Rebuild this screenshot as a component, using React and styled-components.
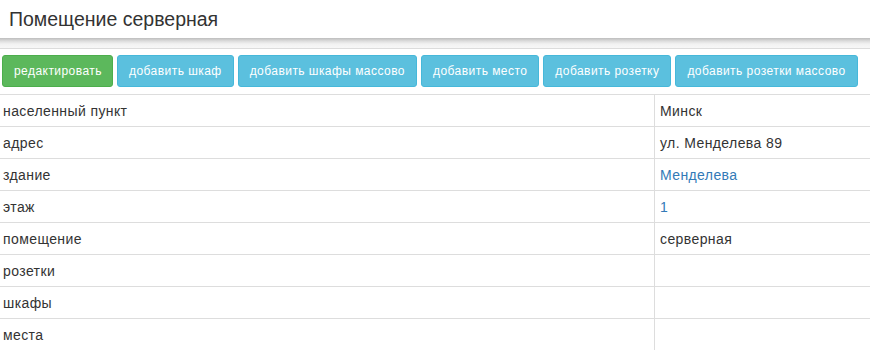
import React from 'react';
import styled, { createGlobalStyle } from 'styled-components';

const GlobalStyle = createGlobalStyle`
    body {
        margin: 0;
        background: #fff;
        font-family: "Liberation Sans", Arial, sans-serif;
        color: #333;
    }
`;

const Header = styled.header`
    height: 38px;
    padding: 0 9px;
    display: flex;
    align-items: center;
`;

const Title = styled.h1`
    margin: 0;
    font-size: 19.5px;
    font-weight: normal;
    color: #333;
`;

const ShadowStrip = styled.div`
    height: 10px;
    background: linear-gradient(#bdbdbd 0px, #dcdcdc 3px, #f2f2f2 6px, #f7f7f7 10px);
    border-bottom: 1px solid #dcdcdc;
`;

const Toolbar = styled.div`
    display: flex;
    gap: 4px;
    padding: 6px 2px 6px;
    margin-bottom: 1px;
`;

const Button = styled.button`
    font-family: "Liberation Sans", Arial, sans-serif;
    font-size: 12px;
    letter-spacing: 0.45px;
    color: #fff;
    height: 32px;
    padding: 0 11px;
    border-radius: 3px;
    border: 1px solid ${p => (p.$green ? '#4cae4c' : '#46b8da')};
    background: ${p => (p.$green ? '#5cb85c' : '#5bc0de')};
    cursor: pointer;
`;

const Table = styled.table`
    width: 100%;
    border-collapse: collapse;
    font-size: 14px;
    letter-spacing: 0.4px;
`;

const Row = styled.tr`
    height: 32px;
    border-top: 1px solid #ddd;
`;

const Cell = styled.td`
    padding: 0 3px;
    vertical-align: middle;
    color: #333;
    & + & {
        border-left: 1px solid #ddd;
        padding-left: 5px;
        width: 207px;
    }
`;

const Link = styled.a`
    color: #337ab7;
    text-decoration: none;
`;

const rows = [
    ['населенный пункт', 'Минск'],
    ['адрес', 'ул. Менделева 89'],
    ['здание', <Link href="#">Менделева</Link>],
    ['этаж', <Link href="#">1</Link>],
    ['помещение', 'серверная'],
    ['розетки', ''],
    ['шкафы', ''],
    ['места', ''],
];

export default function App() {
    return (
        <>
            <GlobalStyle />
            <Header>
                <Title>Помещение серверная</Title>
            </Header>
            <ShadowStrip />
            <Toolbar>
                <Button $green style={{ width: 111 }}>редактировать</Button>
                <Button>добавить шкаф</Button>
                <Button>добавить шкафы массово</Button>
                <Button>добавить место</Button>
                <Button>добавить розетку</Button>
                <Button>добавить розетки массово</Button>
            </Toolbar>
            <Table>
                <tbody>
                    {rows.map(([label, value], i) => (
                        <Row key={i}>
                            <Cell>{label}</Cell>
                            <Cell>{value}</Cell>
                        </Row>
                    ))}
                </tbody>
            </Table>
        </>
    );
}
